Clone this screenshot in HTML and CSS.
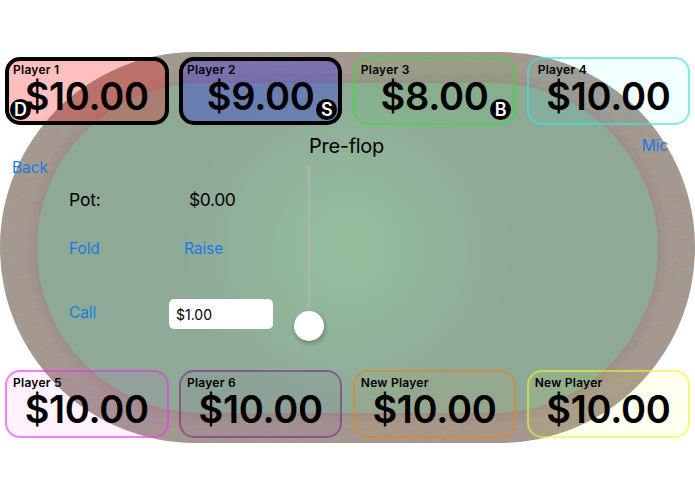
FILE: index.html
```
<!DOCTYPE html>
<html lang="en">
<head>
    <meta charset="UTF-8">
    <meta name="viewport" content="width=device-width, initial-scale=1.0">
    <title>Poker Table</title>
    <link rel="stylesheet" href="styles.css">
</head>

<body>
    <div class="screen">
        <div class="table">
            <svg class="wood" width="695" height="391">
                <filter id="grain">
                    <feTurbulence type="fractalNoise" baseFrequency="0.12 0.3" numOctaves="3" seed="4"/>
                    <feColorMatrix values="0.5 0 0 0 0.25  0 0.5 0 0 0.2  0 0 0.5 0 0.17  0 0 0 0 0.12"/>
                </filter>
                <rect width="695" height="391" filter="url(#grain)"/>
            </svg>
            <div class="felt"></div>
        </div>

        <div class="game">
            <div class="players">
                <div class="player red active">
                    <span class="name">Player 1</span>
                    <span class="amount">$10.00</span>
                    <span class="chip dealer">D</span>
                </div>
                <div class="player blue active">
                    <span class="name">Player 2</span>
                    <span class="amount">$9.00</span>
                    <span class="chip">S</span>
                </div>
                <div class="player green">
                    <span class="name">Player 3</span>
                    <span class="amount">$8.00</span>
                    <span class="chip">B</span>
                </div>
                <div class="player cyan">
                    <span class="name">Player 4</span>
                    <span class="amount">$10.00</span>
                </div>
            </div>

            <div class="controls">
                <h1 class="round">Pre-flop</h1>
                <button class="link mic">Mic</button>
                <button class="link back">Back</button>

                <span class="pot-label">Pot:</span>
                <span class="pot-value">$0.00</span>
                <button class="link fold">Fold</button>
                <button class="link raise">Raise</button>
                <button class="link call">Call</button>
                <input class="bet" type="text" value="$1.00">

                <div class="slider">
                    <div class="track"></div>
                    <div class="thumb"></div>
                </div>
            </div>

            <div class="players">
                <div class="player magenta">
                    <span class="name">Player 5</span>
                    <span class="amount">$10.00</span>
                </div>
                <div class="player purple">
                    <span class="name">Player 6</span>
                    <span class="amount">$10.00</span>
                </div>
                <div class="player orange">
                    <span class="name">New Player</span>
                    <span class="amount">$10.00</span>
                </div>
                <div class="player yellow">
                    <span class="name">New Player</span>
                    <span class="amount">$10.00</span>
                </div>
            </div>
        </div>
    </div>
</body>
</html>
```
FILE: styles.css
```
* {
    box-sizing: border-box;
}
body {
    margin: 0;
    background-color: white;
    font-family: Inter, "Liberation Sans", sans-serif;
    color: black;
}
.screen {
    display: grid;
    width: 695px;
    height: 494px;
    padding-top: 52px;
    overflow: hidden;
}
.table,
.game {
    grid-area: 1 / 1;
    width: 695px;
    height: 391px;
}
.table {
    display: grid;
    border-radius: 196px;
    background-color: #a1958c;
    overflow: hidden;
}
.wood {
    grid-area: 1 / 1;
}
.felt {
    grid-area: 1 / 1;
    position: relative;
    margin: 31px 37px 30px;
    border-radius: 165px;
    background: radial-gradient(circle at 50% 50%, #94bf9f 0, #92b89c 60px, #90b09a 120px, #8eaa97 165px);
    box-shadow: 0 0 0 3px rgba(160, 140, 134, 0.6), 0 0 3px 9px rgba(140, 125, 122, 0.16);
}
.game {
    position: relative;
    padding-top: 5px;
}
.players {
    display: grid;
    grid-template-columns: repeat(4, 163.5px);
    gap: 10.4px;
    padding-left: 5px;
}
.player {
    position: relative;
    height: 68px;
    padding: 2px 6px;
    border: 2px solid;
    border-radius: 15px;
    display: flex;
    flex-direction: column;
}
.name {
    height: 17px;
    line-height: 17px;
    font-size: 12px;
    font-weight: 600;
    letter-spacing: 0.25px;
}
.cyan .name {
    padding-left: 3px;
}
.amount {
    margin-top: -3px;
    line-height: 43px;
    font-size: 38px;
    font-weight: 600;
    letter-spacing: -0.3px;
    text-align: center;
}
.active {
    padding: 0 4px;
    border: 4px solid black !important;
}
.red {
    background-color: rgba(255, 0, 0, 0.25);
}
.blue {
    background-color: rgba(0, 0, 255, 0.25);
}
.green {
    background-color: rgba(0, 255, 0, 0.05);
    border-color: rgba(60, 220, 60, 0.7);
}
.cyan {
    background-color: rgba(0, 255, 255, 0.05);
    border-color: rgba(60, 230, 220, 0.65);
}
.magenta {
    background-color: rgba(255, 0, 255, 0.05);
    border-color: rgba(235, 50, 230, 0.6);
}
.purple {
    background-color: rgba(128, 0, 128, 0.05);
    border-color: rgba(128, 40, 135, 0.6);
}
.orange {
    background-color: rgba(255, 128, 0, 0.05);
    border-color: rgba(230, 130, 30, 0.6);
}
.yellow {
    background-color: rgba(255, 255, 0, 0.06);
    border-color: rgba(240, 245, 40, 0.6);
}
.chip {
    position: absolute;
    right: 3px;
    bottom: 3px;
    width: 21px;
    height: 21px;
    border-radius: 50%;
    background-color: black;
    color: white;
    font-size: 18px;
    font-weight: 600;
    line-height: 21px;
    text-align: center;
}
.active .chip {
    right: 1px;
    bottom: 1px;
}
.active .dealer {
    right: auto;
    left: 1px;
}
.controls {
    display: grid;
    grid-template-columns: 69px 100px 104px 73px 1fr;
    grid-template-rows: 41px 67px 31px 98px;
    align-items: center;
    height: 245px;
}
.round {
    grid-area: 1 / 1 / 2 / -1;
    justify-self: center;
    margin: 0 2px 0 0;
    font-size: 20px;
    font-weight: 400;
    letter-spacing: -0.3px;
}
.link {
    justify-self: start;
    padding: 0;
    border: none;
    background: none;
    color: #177ae2;
    font-family: inherit;
    font-size: 15.5px;
    letter-spacing: -0.1px;
    line-height: 20px;
    cursor: pointer;
}
.mic {
    grid-area: 1 / 5;
    justify-self: end;
    margin-right: 27px;
}
.back {
    grid-area: 1 / 1 / 3 / 2;
    align-self: start;
    margin: 33px 0 0 12px;
}
.pot-label {
    grid-area: 2 / 2;
    font-size: 17.5px;
    letter-spacing: -0.2px;
}
.pot-value {
    grid-area: 2 / 3;
    padding-left: 20px;
    font-size: 17.5px;
    letter-spacing: -0.4px;
}
.fold {
    grid-area: 3 / 2;
}
.raise {
    grid-area: 3 / 3;
    margin-left: 15px;
}
.call {
    grid-area: 4 / 2;
}
.bet {
    grid-area: 4 / 3;
    width: 104px;
    height: 30px;
    margin-top: 2px;
    padding: 0 7px;
    border: none;
    border-radius: 5px;
    background-color: white;
    font-family: inherit;
    font-size: 14px;
    color: black;
}
.slider {
    grid-area: 2 / 4 / 5 / 5;
    align-self: start;
    display: flex;
    flex-direction: column;
    align-items: center;
    margin-right: 1px;
}
.track {
    width: 2px;
    height: 145px;
    background-color: #b0b3b0;
}
.thumb {
    width: 30px;
    height: 30px;
    border-radius: 50%;
    background-color: white;
    box-shadow: 1px 2px 5px rgba(0, 0, 0, 0.3);
}
```
